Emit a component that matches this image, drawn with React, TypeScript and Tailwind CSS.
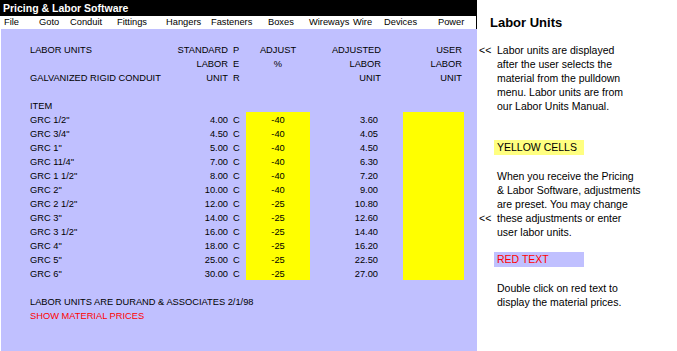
import type { ReactNode } from 'react';

const font = "font-['Liberation_Sans',Arial,sans-serif]";

const menu = [
    { label: 'File', w: 'w-[35px]' },
    { label: 'Goto', w: 'w-[31px]' },
    { label: 'Conduit', w: 'w-[47px]' },
    { label: 'Fittings', w: 'w-[49px]' },
    { label: 'Hangers', w: 'w-[45px]' },
    { label: 'Fasteners', w: 'w-[57px]' },
    { label: 'Boxes', w: 'w-[41px]' },
    { label: 'Wireways', w: 'w-[44px]' },
    { label: 'Wire', w: 'w-[31px]' },
    { label: 'Devices', w: 'w-[54px]' },
    { label: 'Power', w: 'w-[36px]' },
];

const items: [string, string, string, string][] = [
    ['GRC 1/2"', '4.00', '-40', '3.60'],
    ['GRC 3/4"', '4.50', '-40', '4.05'],
    ['GRC 1"', '5.00', '-40', '4.50'],
    ['GRC 11/4"', '7.00', '-40', '6.30'],
    ['GRC 1 1/2"', '8.00', '-40', '7.20'],
    ['GRC 2"', '10.00', '-40', '9.00'],
    ['GRC 2 1/2"', '12.00', '-25', '10.80'],
    ['GRC 3"', '14.00', '-25', '12.60'],
    ['GRC 3 1/2"', '16.00', '-25', '14.40'],
    ['GRC 4"', '18.00', '-25', '16.20'],
    ['GRC 5"', '25.00', '-25', '22.50'],
    ['GRC 6"', '30.00', '-25', '27.00'],
];

const cell = 'h-[14px] pt-[2px] leading-[12px] whitespace-nowrap';

// one spreadsheet row: item | standard | P | adjust | adjusted | gap | user
function Row({
    item,
    std,
    p,
    adj,
    adjusted,
    user,
    yellow = false,
    number = false,
    red = false,
}: {
    item?: ReactNode;
    std?: ReactNode;
    p?: ReactNode;
    adj?: ReactNode;
    adjusted?: ReactNode;
    user?: ReactNode;
    yellow?: boolean;
    number?: boolean;
    red?: boolean;
}) {
    return (
        <div className="grid grid-cols-[29px_140px_59px_17px_64px_72px_21px_61px_13px] h-[14px]">
            <div className={cell} />
            <div className={`${cell} ${red ? 'text-[#ff0000]' : ''}`}>{item}</div>
            <div className={`${cell} text-right pr-[1px]`}>{std}</div>
            <div className={`${cell} pl-[4px]`}>{p}</div>
            <div className={`${cell} text-center ${yellow ? 'bg-[#ffff00]' : ''}`}>{adj}</div>
            <div className={`${cell} text-right ${number ? 'pr-[4px]' : 'pr-[1px]'}`}>{adjusted}</div>
            <div className={cell} />
            <div className={`${cell} text-right pr-[2px] ${yellow ? 'bg-[#ffff00]' : ''}`}>{user}</div>
            <div className={cell} />
        </div>
    );
}

function Line({ mark, children }: { mark?: boolean; children: ReactNode }) {
    return (
        <div className="flex h-[14px] leading-[14px] whitespace-nowrap">
            <div className="w-[18px]">{mark ? '<<' : ''}</div>
            <div>{children}</div>
        </div>
    );
}

export default function App() {
    return (
        <div className={`${font} flex w-[677px] h-[351px] bg-white text-black overflow-hidden`}>
            {/* Spreadsheet side */}
            <div className="flex flex-col w-[477px] h-full">
                <div className="h-[16px] bg-black text-white font-bold text-[10.5px] leading-[16px] pl-[3px]">
                    Pricing &amp; Labor Software
                </div>
                <div className="flex h-[13px] bg-white border-r border-black text-[9.3px] leading-[13px] pl-[4px]">
                    {menu.map((m) => (
                        <div key={m.label} className={`${m.w} shrink-0`}>
                            {m.label}
                        </div>
                    ))}
                </div>
                <div className="flex-1 bg-[#c0c0ff] border-l border-white pt-[13px] text-[9.3px]">
                    <Row item="LABOR UNITS" std="STANDARD" p="P" adj="ADJUST" adjusted="ADJUSTED" user="USER" />
                    <Row std="LABOR" p="E" adj="%" adjusted="LABOR" user="LABOR" />
                    <Row item="GALVANIZED RIGID CONDUIT" std="UNIT" p="R" adjusted="UNIT" user="UNIT" />
                    <Row />
                    <Row item="ITEM" />
                    {items.map(([name, std, adj, adjusted]) => (
                        <Row key={name} item={name} std={std} p="C" adj={adj} adjusted={adjusted} yellow number />
                    ))}
                    <Row />
                    <Row item="LABOR UNITS ARE DURAND & ASSOCIATES 2/1/98" />
                    <Row item="SHOW MATERIAL PRICES" red />
                </div>
            </div>

            {/* Help side */}
            <div className="flex-1 pl-[2px] text-[10.5px]">
                <div className="mt-[15px] ml-[11px] font-bold text-[13px] leading-[16px]">Labor Units</div>

                <div className="mt-[12px]">
                    <Line mark>Labor units are displayed</Line>
                    <Line>after the user selects the</Line>
                    <Line>material from the pulldown</Line>
                    <Line>menu. Labor units are from</Line>
                    <Line>our Labor Units Manual.</Line>
                </div>

                <div className="mt-[27px] ml-[15px] w-[90px] h-[15px] pl-[3px] leading-[15px] bg-[#ffff80]">
                    YELLOW CELLS
                </div>

                <div className="mt-[14px]">
                    <Line>When you receive the Pricing</Line>
                    <Line>&amp; Labor Software, adjustments</Line>
                    <Line>are preset. You may change</Line>
                    <Line mark>these adjustments or enter</Line>
                    <Line>user labor units.</Line>
                </div>

                <div className="mt-[13px] ml-[15px] w-[90px] h-[15px] pl-[3px] leading-[15px] bg-[#c0c0ff] text-[#ff0000]">
                    RED TEXT
                </div>

                <div className="mt-[14px]">
                    <Line>Double click on red text to</Line>
                    <Line>display the material prices.</Line>
                </div>
            </div>
        </div>
    );
}
